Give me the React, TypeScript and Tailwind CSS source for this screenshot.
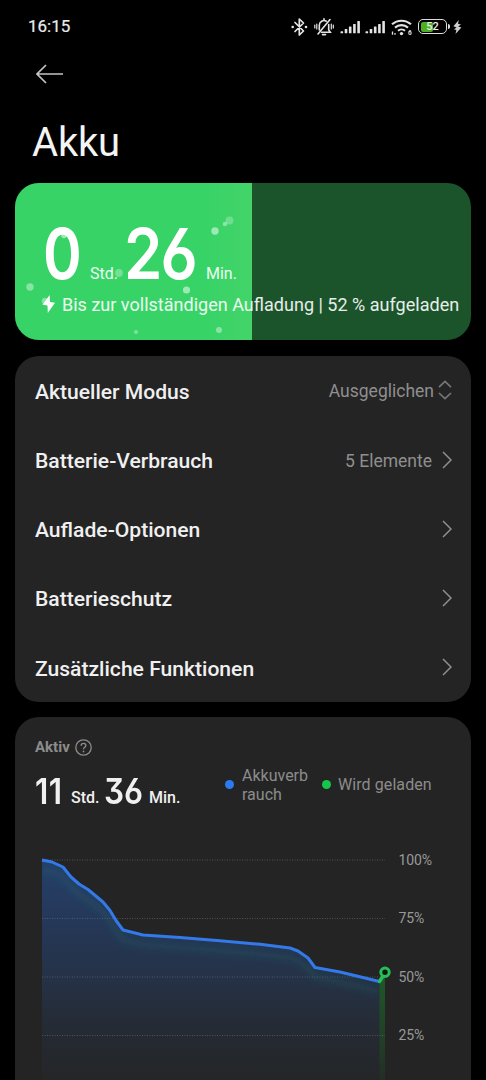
import { clsx } from 'clsx';

const menuItems = [
    { label: 'Aktueller Modus', value: 'Ausgeglichen', selector: true },
    { label: 'Batterie-Verbrauch', value: '5 Elemente' },
    { label: 'Auflade-Optionen' },
    { label: 'Batterieschutz' },
    { label: 'Zusätzliche Funktionen' },
];

const gridLines = [
    { label: '100%', y: 0 },
    { label: '75%', y: 58.5 },
    { label: '50%', y: 117 },
    { label: '25%', y: 175.5 },
];

const bubbles = [
    { x: 15, y: 104, r: 3.7, o: 0.4 },
    { x: 200, y: 48, r: 3.7, o: 0.5 },
    { x: 210, y: 41, r: 2.3, o: 0.4 },
    { x: 214.5, y: 37.5, r: 3.9, o: 0.25 },
    { x: 104, y: 90, r: 3.9, o: 0.3 },
    { x: 171.5, y: 107, r: 3.6, o: 0.5 },
    { x: 204, y: 147, r: 3, o: 0.4 },
    { x: 121, y: 149, r: 2, o: 0.35 },
    { x: 49, y: 52.5, r: 2.8, o: 0.5 },
    { x: 30, y: 118, r: 3.2, o: 0.4 },
];

const usageLine =
    '0,0 10,2 21,7 29,17 37,24 46,29.5 61,42 68,50.5 74,60.5 81,70 101,75 138,77.5 178,80.8 218,84.3 248,88 256,91 266,98 273,107.5 298,112 323,118 330,119.7 337.5,121.5';

const Signal = () => (
    <svg width="21" height="14" viewBox="0 0 21 14" fill="#e4e4e4">
        <rect x="0.5" y="11.3" width="2.6" height="2" rx="0.6" />
        <rect x="4.7" y="9" width="2.6" height="4.3" rx="0.6" />
        <rect x="8.9" y="6.5" width="2.6" height="6.8" rx="0.6" />
        <rect x="13.1" y="4" width="2.6" height="9.3" rx="0.6" />
        <rect x="17.3" y="1" width="2.6" height="12.3" rx="0.6" />
    </svg>
);

const StatusBar = () => (
    <div className="flex h-[53px] items-center justify-between pl-[28px] pr-[24px]">
        <span className="text-[17px] text-[#ececec] [-webkit-text-stroke:0.2px_#ececec]">16:15</span>
        <div className="flex items-center">
            <svg width="17" height="20" viewBox="0 0 17 20" fill="none" stroke="#e4e4e4" strokeWidth="1.7" className="mr-[6px]">
                <path d="M4 5.5 12.5 14 8.3 18V2L12.5 6 4 14.5" strokeLinejoin="round" strokeLinecap="round" />
                <circle cx="1.7" cy="10" r="1.3" fill="#e4e4e4" stroke="none" />
                <circle cx="15" cy="10" r="1.3" fill="#e4e4e4" stroke="none" />
            </svg>
            <svg width="20" height="20" viewBox="0 0 20 20" fill="none" stroke="#e4e4e4" strokeWidth="1.6" strokeLinecap="round" className="mr-[6px]">
                <path d="M5.3 13V8.2a4.7 4.7 0 0 1 7-4M14.7 7.5V13l1.6 2.3H7.4M10 1.8V3M8.5 17.6h3" />
                <path d="M16 2.5 4 17" />
                <path d="M2.8 7v5M.8 8v3M17.3 7v5M19.3 8v3" strokeWidth="1.2" />
            </svg>
            <div className="mr-[4px]"><Signal /></div>
            <div className="mr-[5px]"><Signal /></div>
            <svg width="22" height="18" viewBox="0 0 22 18" fill="none" stroke="#e4e4e4" strokeWidth="2.1" className="mr-[5px]">
                <path d="M1 6.3a14.3 14.3 0 0 1 19 0M4 9.6a9.8 9.8 0 0 1 13 0M7 12.8a5.2 5.2 0 0 1 7 0" />
                <circle cx="10.5" cy="15.6" r="1.7" fill="#e4e4e4" stroke="none" />
                <path d="M1.5 13.5v3.3M4 15v1.8" strokeWidth="1.3" />
                <text x="17" y="16.5" fontSize="6.5" fontWeight="700" fill="#e4e4e4" stroke="none">6</text>
            </svg>
            <div className="relative flex h-[15px] w-[29px] items-center rounded-[5px] border-[1.5px] border-[#dcdcdc] p-[1.5px]">
                <div className="h-full w-[12px] rounded-[2px] bg-[#4cb020]" />
                <span className="absolute inset-0 flex items-center justify-center text-[11px] font-medium leading-none text-[#ececec]">52</span>
            </div>
            <div className="ml-[1px] mr-[3px] h-[5px] w-[2px] rounded-r bg-[#dcdcdc]" />
            <svg width="9" height="14" viewBox="0 0 9 14" fill="#cfcfcf">
                <path d="M5.8 0 .4 6.2l3.2 1.2L1 9.2l2.4.8L2.5 14 8.4 7.6 5.2 6.5 8 4.4 5 3.8Z" />
            </svg>
        </div>
    </div>
);

const Digits = ({ children, className }: { children: string; className: string }) => (
    <span
        className={clsx(
            "inline-block origin-bottom-left whitespace-nowrap font-['Inter',sans-serif] leading-none [font-feature-settings:'cv03','cv09']",
            className
        )}
    >
        {children}
    </span>
);

const ChargeCard = () => (
    <section className="relative mx-[15px] h-[157px] overflow-hidden rounded-[24px] bg-[#1b542b]">
        <div className="absolute inset-y-0 left-0 w-[52%] bg-linear-to-r from-[#37d367] from-80% to-[#43d469]" />
        <div className="relative flex h-[108px] items-end whitespace-nowrap pl-[28px] text-[16px] leading-[20px] text-white/90">
            <Digits className="mb-[2px] w-[47px] scale-x-[.84] text-[70px] font-semibold tracking-[-1px] text-white">0</Digits>
            <span className="mb-[7px] w-[34px]">Std.</span>
            <Digits className="mb-[2px] w-[82px] scale-x-[.88] text-[70px] font-semibold tracking-[-2px] text-white">26</Digits>
            <span className="mb-[7px]">Min.</span>
        </div>
        <div className="relative flex items-center pl-[27px] pt-[2px]">
            <svg width="14" height="18" viewBox="0 0 14 18" fill="#fff" className="mb-[2px]">
                <path d="M7.6 0 .5 9.8l5 .8L5.8 18 13 7.8l-5-.9Z" />
            </svg>
            <span className="ml-[6px] whitespace-nowrap text-[18.05px] leading-[24px] text-white/90">
                Bis zur vollständigen Aufladung | 52 % aufgeladen
            </span>
        </div>
        <svg className="absolute inset-0" width="456" height="157">
            {bubbles.map((b, i) => (
                <circle key={i} cx={b.x} cy={b.y} r={b.r} fill="#fff" opacity={b.o} />
            ))}
        </svg>
    </section>
);

const Menu = () => (
    <section className="mx-[15px] mt-[16px] flex h-[346px] flex-col rounded-[24px] bg-[#242424] pl-[20px] pr-[19px]">
        {menuItems.map((item) => (
            <div key={item.label} className="flex flex-1 items-center pt-[2px]">
                <span className="flex-1 text-[21.1px] font-medium text-[#f0f0f0]">{item.label}</span>
                {item.value && <span className="text-[17.5px] text-[#8f8f8f]">{item.value}</span>}
                {item.selector ? (
                    <svg width="14" height="20" viewBox="0 0 14 20" fill="none" stroke="#777" strokeWidth="1.7" className="mb-[3px] ml-[4px]">
                        <path d="M1 7.2 7 1.5l6 5.7M1 13l6 5.7 6-5.7" />
                    </svg>
                ) : (
                    <svg width="10" height="18" viewBox="0 0 10 18" fill="none" stroke="#909090" strokeWidth="1.5" className="mb-[2px] ml-[10px]">
                        <path d="m1 1 8 8-8 8" />
                    </svg>
                )}
            </div>
        ))}
    </section>
);

const Chart = () => (
    <svg width="400" height="230" viewBox="0 0 400 230" className="block overflow-visible">
        <defs>
            <linearGradient id="usage" x1="0" y1="0" x2="0" y2="220" gradientUnits="userSpaceOnUse">
                <stop offset="0" stopColor="#2870e8" stopOpacity="0.36" />
                <stop offset="0.5" stopColor="#2870e8" stopOpacity="0.19" />
                <stop offset="1" stopColor="#3060a0" stopOpacity="0.03" />
            </linearGradient>
            <linearGradient id="charging" x1="0" y1="112" x2="0" y2="220" gradientUnits="userSpaceOnUse">
                <stop offset="0" stopColor="#18a830" stopOpacity="0.4" />
                <stop offset="1" stopColor="#18a830" stopOpacity="0.08" />
            </linearGradient>
            <clipPath id="area">
                <polygon points={`${usageLine} 337.5,230 0,230`} />
            </clipPath>
            <filter id="glow" x="-10%" y="-20%" width="120%" height="150%">
                <feGaussianBlur stdDeviation="3.5" />
            </filter>
        </defs>
        {gridLines.map((line) => (
            <g key={line.label}>
                <line x1="0" x2="343" y1={line.y} y2={line.y} stroke="#505252" strokeDasharray="1 1.5" />
                <text x="356.5" y={line.y + 4.5} fontSize="14" letterSpacing="-0.15" fill="#999">{line.label}</text>
            </g>
        ))}
        <polygon points={`${usageLine} 337.5,230 0,230`} fill="url(#usage)" />
        <g clipPath="url(#area)">
            <polyline points={usageLine} transform="translate(0 10)" fill="none" stroke="#28706a" strokeOpacity="0.25" strokeWidth="6" filter="url(#glow)" />
        </g>
        <polygon points="337.5,121 343,114 343,230 337.5,230" fill="url(#charging)" />
        <polyline points={usageLine} fill="none" stroke="#337ae8" strokeWidth="3" strokeLinejoin="round" />
        <path d="M337.5 121.5 341 116" stroke="#27bd59" strokeWidth="3.5" strokeLinecap="round" />
        <circle cx="343" cy="112.3" r="4.2" fill="#101810" stroke="#27bd59" strokeWidth="3" />
    </svg>
);

const ActivityCard = () => (
    <section className="mx-[15px] mt-[15px] h-[400px] rounded-[24px] bg-[#242424] pt-[20px]">
        <div className="flex h-[20px] items-center pl-[20px]">
            <span className="text-[15px] font-bold text-[#8c8c8c]">Aktiv</span>
            <svg width="17" height="17" viewBox="0 0 17 17" fill="none" stroke="#8c8c8c" strokeWidth="1.3" className="ml-[5px]">
                <circle cx="8.5" cy="8.5" r="7.7" />
                <path d="M6.1 6.8c0-3.2 4.8-3.2 4.8-.3 0 1.8-2.4 1.9-2.4 3.8" />
                <circle cx="8.5" cy="12.5" r=".9" fill="#8c8c8c" stroke="none" />
            </svg>
        </div>
        <div className="flex h-[54px] items-center pl-[20px] pt-[1px]">
            <div className="flex h-[46px] w-[190px] items-end whitespace-nowrap text-[16px] font-medium leading-[20px] text-[#f0f0f0]">
                <Digits className="mb-[-1px] w-[36px] scale-x-[.9] text-[35px] font-semibold tracking-[0.5px]">11</Digits>
                <span className="w-[33px]">Std.</span>
                <Digits className="mb-[-1px] w-[45px] scale-x-[.9] text-[35px] font-semibold">36</Digits>
                <span>Min.</span>
            </div>
            <span className="mb-[1px] size-[9px] rounded-full bg-[#2b7bf3]" />
            <span className="ml-[8px] w-[68px] break-all text-[16px] leading-[19px] text-[#8c8c8c]">Akkuverbrauch</span>
            <span className="mb-[1px] ml-[12px] size-[9px] rounded-full bg-[#16c64b]" />
            <span className="ml-[7px] whitespace-nowrap text-[16px] tracking-[0.08px] text-[#8c8c8c]">Wird geladen</span>
        </div>
        <div className="pl-[27px] pt-[49px]">
            <Chart />
        </div>
    </section>
);

const App = () => {
    return (
        <main className="h-[1080px] w-[486px] overflow-hidden bg-black font-['Roboto',sans-serif]">
            <StatusBar />
            <header className="h-[130px] pt-[11px]">
                <svg width="28" height="20" viewBox="0 0 28 20" fill="none" stroke="#c4c4c4" strokeWidth="1.7" className="ml-[36px]">
                    <path d="M27 10H1M10 1 1 10l9 9" />
                </svg>
                <h1 className="ml-[32px] mt-[34px] text-[40px] leading-[50px] tracking-[-0.2px] text-[#f4f4f4]">Akku</h1>
            </header>
            <ChargeCard />
            <Menu />
            <ActivityCard />
        </main>
    );
};

export default App;
